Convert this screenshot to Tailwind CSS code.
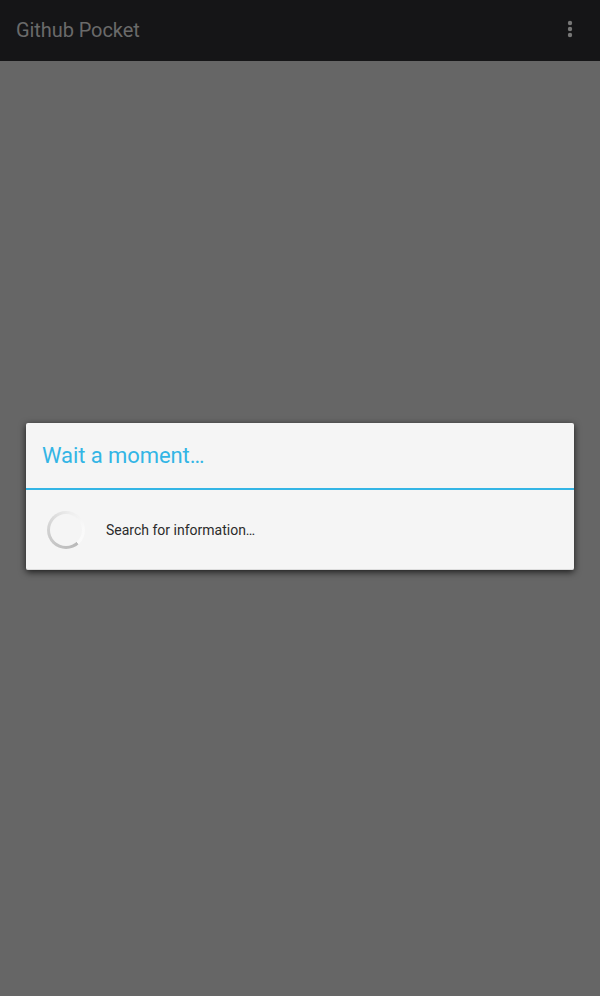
<!DOCTYPE html>
<html lang="en">
<head>
<meta charset="utf-8">
<title>Github Pocket</title>
<script src="https://cdn.jsdelivr.net/npm/@tailwindcss/browser@4"></script>
</head>
<body class="font-[Roboto,sans-serif]">
<div class="relative flex h-[996px] w-[600px] flex-col overflow-hidden bg-[#666666]">
  <header class="flex h-[61px] items-center justify-between bg-[#151517] pl-4 pr-[27px]">
    <h1 class="h-[61px] text-[20px] leading-[61px] tracking-[-0.08px] text-[#6a6a6a]">Github Pocket</h1>
    <svg class="-mt-[3px] h-[18px] w-[6px]" viewBox="0 0 6 18" fill="#777777"><circle cx="3" cy="3" r="2.2"/><circle cx="3" cy="9" r="2.2"/><circle cx="3" cy="15" r="2.2"/></svg>
  </header>
  <main class="flex-1 px-[26px] pt-[362px]">
    <section role="dialog" class="h-[147px] rounded-[2px] border-b border-[#dddddd] bg-[#f5f5f5] shadow-[0_2px_7px_rgba(0,0,0,0.75)]">
      <h2 class="h-[67px] border-b-2 border-[#33b5e5] pl-4 text-[22px] leading-[65px] tracking-[-0.08px] text-[#33b5e5]">Wait a moment…</h2>
      <div class="flex h-[80px] items-center pl-[21px]">
        <div class="flex size-[38px] items-center justify-center rounded-full bg-[conic-gradient(from_140deg,#b9b9b9_0deg,#c6c6c6_80deg,#dadada_170deg,#eeeeee_235deg,#f9f9f9_300deg,#fbfbfb_358deg,#b9b9b9_360deg)]">
          <div class="size-[32px] rounded-full bg-[#f5f5f5]"></div>
        </div>
        <p class="ml-[21px] text-[14px] text-[#2b2b2b]">Search for information…</p>
      </div>
    </section>
  </main>
</div>
</body>
</html>
